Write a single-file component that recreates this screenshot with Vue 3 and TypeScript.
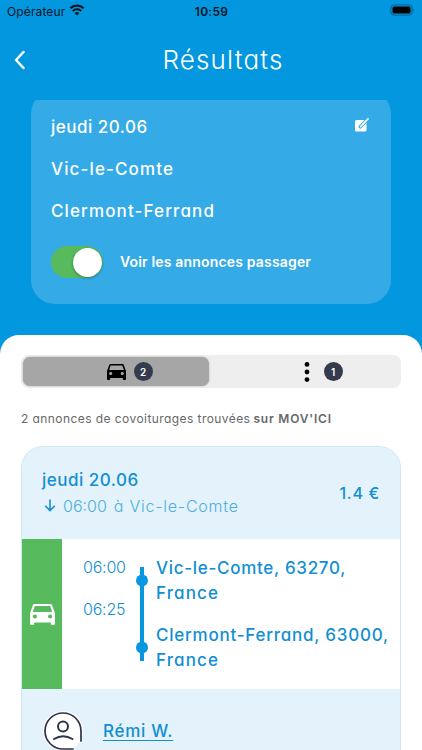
<script setup lang="ts">
interface Stop {
  time: string
  lines: string[]
}

const day = 'jeudi 20.06'
const from = 'Vic-le-Comte'
const to = 'Clermont-Ferrand'
const stops: Stop[] = [
  { time: '06:00', lines: ['Vic-le-Comte, 63270,', 'France'] },
  { time: '06:25', lines: ['Clermont-Ferrand, 63000,', 'France'] },
]
const carPath =
  'M18.92 6.01C18.72 5.42 18.16 5 17.5 5h-11c-.66 0-1.21.42-1.42 1.01L3 12v8c0 .55.45 1 1 1h1c.55 0 1-.45 1-1v-1h12v1c0 .55.45 1 1 1h1c.55 0 1-.45 1-1v-8l-2.08-5.99zM6.5 16c-.83 0-1.5-.67-1.5-1.5S5.67 13 6.5 13s1.5.67 1.5 1.5S7.33 16 6.5 16zm11 0c-.83 0-1.5-.67-1.5-1.5s.67-1.5 1.5-1.5 1.5.67 1.5 1.5-.67 1.5-1.5 1.5zM5 11l1.5-4.5h11L19 11H5z'
</script>

<template>
  <div class="screen">
    <div class="status">
      <div class="carrier">
        <span class="operator">Opérateur</span>
        <svg class="wifi" width="16" height="12" viewBox="0 0 16 12" fill="none" stroke="#07151f">
          <path d="M1.300 4.300a9.600 9.600 0 0 1 13.400 0" stroke-width="2.300" />
          <path d="M3.800 7a6 6 0 0 1 8.400 0" stroke-width="2" />
          <path d="M8 11.400 5.700 9.100a3.300 3.300 0 0 1 4.600 0z" fill="#07151f" stroke="none" />
        </svg>
      </div>
      <span class="clock">10:59</span>
      <svg class="battery" width="26" height="12" viewBox="0 0 26 12">
        <rect x=".9" y=".9" width="21.200" height="10.200" rx="3" fill="none" stroke="#07608f" />
        <rect x="2.500" y="2.500" width="18" height="7" rx="1.500" fill="#000" />
        <path d="M23.300 4.300q1.500 1.700 0 3.400z" fill="#07608f" />
      </svg>
    </div>

    <header class="topbar">
      <svg class="back" width="12" height="20" viewBox="0 0 12 20" fill="none" stroke="#fff" stroke-width="2.500" stroke-linecap="round" stroke-linejoin="round">
        <path d="M10.500 2 3 10l7.500 8" />
      </svg>
      <h1>Résultats</h1>
    </header>

    <div class="search-clip">
      <section class="search">
        <div class="search-row">
          <span class="s-day">{{ day }}</span>
          <svg class="edit" width="15" height="15" viewBox="0 0 15 15">
            <rect x="0" y="3" width="11.500" height="11.500" rx="1.500" fill="#fff" />
            <path d="M5.300 9.800 12 2.900" stroke="#34aae6" stroke-width="3.600" stroke-linecap="round" />
            <path d="M5.500 9.600 11.300 3.600" stroke="#fff" stroke-width="1.700" stroke-linecap="round" />
            <path d="M12 2.800l1-1" stroke="#fff" stroke-width="1.700" stroke-linecap="round" />
          </svg>
        </div>
        <div class="search-row wide">{{ from }}</div>
        <div class="search-row wide">{{ to }}</div>
        <div class="toggle-row">
          <span class="toggle"><i class="knob"></i></span>
          <span class="toggle-label">Voir les annonces passager</span>
        </div>
      </section>
    </div>

    <main class="sheet">
      <div class="segments">
        <div class="segment active">
          <svg class="car" width="19" height="16" viewBox="3 5 18 16" preserveAspectRatio="none">
            <path fill="#000" :d="carPath" />
          </svg>
          <span class="badge">2</span>
        </div>
        <div class="segment">
          <svg class="dots" width="6" height="20" viewBox="0 0 6 20">
            <circle cx="3" cy="2.400" r="2.400" />
            <circle cx="3" cy="10" r="2.400" />
            <circle cx="3" cy="17.600" r="2.400" />
          </svg>
          <span class="badge">1</span>
        </div>
      </div>

      <p class="count"><span class="found">2 annonces de covoiturages trouvées</span><b>sur MOV'ICI</b></p>

      <article class="ride">
        <div class="ride-head">
          <div class="ride-when">
            <div class="r-day">{{ day }}</div>
            <div class="r-start">
              <svg width="12" height="13" viewBox="0 0 12 13" fill="none" stroke="#118fd2" stroke-width="1.600">
                <path d="M6 .5v11M1.200 6.700 6 11.500l4.800-4.800" />
              </svg>
              <span class="r-time">06:00</span>
              <span class="r-place">à {{ from }}</span>
            </div>
          </div>
          <div class="price">1.4 €</div>
        </div>
        <div class="ride-body">
          <div class="mode">
            <svg width="25" height="21" viewBox="3 5 18 16" preserveAspectRatio="none">
              <path fill="#fff" :d="carPath" />
            </svg>
          </div>
          <div class="times">
            <span v-for="s in stops" :key="s.time">{{ s.time }}</span>
          </div>
          <svg class="track" width="12" height="94" viewBox="0 0 12 94" fill="#0797df">
            <rect x="4" width="4" height="94" />
            <circle cx="6" cy="13.500" r="6" />
            <circle cx="6" cy="80.500" r="6" />
          </svg>
          <div class="places">
            <div v-for="(s, i) in stops" :key="s.time" class="place" :class="{ arrival: i === 1 }">
              <div v-for="l in s.lines" :key="l" class="place-line">{{ l }}</div>
            </div>
          </div>
        </div>
        <div class="driver">
          <svg width="40" height="40" viewBox="0 0 40 40" fill="none">
            <circle cx="20" cy="20" r="20" fill="#fff" />
            <g stroke="#2d3448" stroke-width="1.700" stroke-linecap="round">
              <path d="M30 38H20A18 18 0 1 1 38 20v10" />
              <circle cx="20" cy="15.500" r="5" stroke-width="2" />
              <path d="M11 28q9-5.500 18.500 0" stroke-width="2" />
            </g>
          </svg>
          <span class="name">Rémi W.</span>
        </div>
      </article>
    </main>
  </div>
</template>

<style>
body {
  overflow: hidden;
}
</style>

<style scoped>
.screen {
  width: 422px;
  height: 750px;
  overflow: hidden;
  box-sizing: border-box;
  display: flex;
  flex-direction: column;
  background: #0297df;
  font-family: Inter, 'Open Sans', sans-serif;
  font-feature-settings: 'cv11';
  white-space: nowrap;
}
.screen * {
  box-sizing: border-box;
}
.status {
  height: 22px;
  flex: none;
  display: grid;
  grid-template-columns: 1fr auto 1fr;
  align-items: center;
  padding: 0 6px 0 7px;
  color: #07151f;
  font-feature-settings: normal;
}
.carrier {
  display: flex;
  align-items: center;
  gap: 4px;
}
.operator {
  font-size: 12px;
  letter-spacing: 0.12px;
}
.wifi {
  margin-top: -2px;
}
.clock {
  font-size: 12px;
  font-weight: 600;
  letter-spacing: 0.25px;
}
.battery {
  justify-self: end;
  margin-top: -2px;
}
.topbar {
  height: 78px;
  flex: none;
  display: grid;
  grid-template-columns: 12px 1fr 12px;
  align-items: center;
  padding: 0 12px 2px 13px;
}
h1 {
  margin: 0;
  padding-left: 23px;
  text-align: center;
  color: #fff;
  font-size: 26px;
  font-weight: 300;
  line-height: 36px;
  letter-spacing: 1.15px;
}
.search-clip {
  height: 235px;
  flex: none;
  overflow: hidden;
  padding: 0 31px;
}
.search {
  height: 214px;
  margin-top: -10px;
  padding: 16px 20px 0;
  border-radius: 24px;
  background: #34aae6;
  color: #fff;
}
.search-row {
  height: 42px;
  display: flex;
  align-items: center;
  justify-content: space-between;
  font-size: 17px;
  font-weight: 500;
  letter-spacing: 0.5px;
}
.search-row.wide {
  letter-spacing: 1.12px;
}
.edit {
  margin: -6px 1px 0 0;
}
.toggle-row {
  display: flex;
  align-items: center;
  gap: 17px;
  margin-top: 14px;
}
.toggle {
  width: 52px;
  height: 32px;
  border-radius: 16px;
  padding: 1.500px;
  display: flex;
  justify-content: flex-end;
  align-items: center;
  background: #57bb5e;
}
.knob {
  width: 29px;
  height: 29px;
  border-radius: 50%;
  background: #fff;
  box-shadow: 0 1px 3px rgba(0, 0, 0, 0.35);
}
.toggle-label {
  margin-top: -2px;
  font-size: 14px;
  font-weight: 600;
  letter-spacing: 0.17px;
  font-feature-settings: normal;
}
.sheet {
  height: 415px;
  flex: none;
  overflow: hidden;
  padding: 20px 21px 0;
  background: #fff;
  border-radius: 19px 19px 0 0;
}
.segments {
  height: 33px;
  display: grid;
  grid-template-columns: 186px 1fr;
  gap: 2px;
  padding: 2px;
  border-radius: 8px;
  background: #eee;
}
.segment {
  display: flex;
  align-items: center;
  justify-content: center;
  gap: 8px;
  border-radius: 7px;
  padding-left: 27px;
}
.segment:not(.active) {
  gap: 14px;
  padding: 0 0 0 36px;
}
.segment.active {
  background: #a6a6a6;
  box-shadow: 0 0 2px rgba(0, 0, 0, 0.3);
}
.badge {
  width: 19px;
  height: 19px;
  border-radius: 50%;
  display: flex;
  align-items: center;
  justify-content: center;
  background: #353b4d;
  color: #fff;
  font-size: 10px;
  font-weight: 600;
}
.count {
  margin: 20px 0 18px;
  height: 20px;
  display: flex;
  align-items: center;
  gap: 3px;
  color: #686868;
  font-size: 12px;
}
.found {
  letter-spacing: 0.43px;
}
.count b {
  font-weight: 600;
  letter-spacing: 0.8px;
}
.ride {
  height: 330px;
  border: 1px solid #cde9f6;
  border-radius: 22px;
  background: #e4f2fb;
  overflow: hidden;
  color: #118fd2;
}
.ride-head {
  height: 92px;
  display: flex;
  justify-content: space-between;
  padding: 20px 20px 0 20px;
}
.r-day {
  font-size: 17px;
  line-height: 26px;
  font-weight: 500;
  letter-spacing: 0.5px;
}
.r-start {
  display: flex;
  align-items: center;
  height: 25px;
  padding-left: 2px;
  color: #4daee0;
  font-size: 16px;
  font-weight: 300;
}
.r-time {
  margin-left: 7px;
}
.r-place {
  margin-left: 7px;
  letter-spacing: 0.78px;
}
.price {
  margin-top: 13px;
  font-size: 16px;
  line-height: 26px;
  font-weight: 500;
  letter-spacing: 0.7px;
}
.ride-body {
  height: 150px;
  display: flex;
  background: #fff;
}
.mode {
  width: 40px;
  background: #57bb5e;
  display: flex;
  align-items: center;
  justify-content: center;
}
.times {
  display: flex;
  flex-direction: column;
  width: 74px;
  padding: 7px 0 0 21px;
  font-size: 16px;
  font-weight: 300;
  line-height: 42px;
  letter-spacing: -0.2px;
}
.track {
  margin-top: 28px;
}
.places {
  padding: 17px 0 0 8px;
  font-size: 17px;
  font-weight: 500;
  letter-spacing: 0.7px;
}
.place-line {
  line-height: 25px;
}
.place-line + .place-line {
  letter-spacing: 1.1px;
}
.arrival {
  margin-top: 17px;
  letter-spacing: 0.76px;
}
.driver {
  display: flex;
  align-items: center;
  gap: 20px;
  padding: 22px 0 0 21px;
  height: 62px;
}
.name {
  font-size: 17px;
  font-weight: 500;
  letter-spacing: 0.7px;
  text-decoration: underline;
  text-underline-offset: 3px;
  text-decoration-thickness: 1px;
}
</style>
